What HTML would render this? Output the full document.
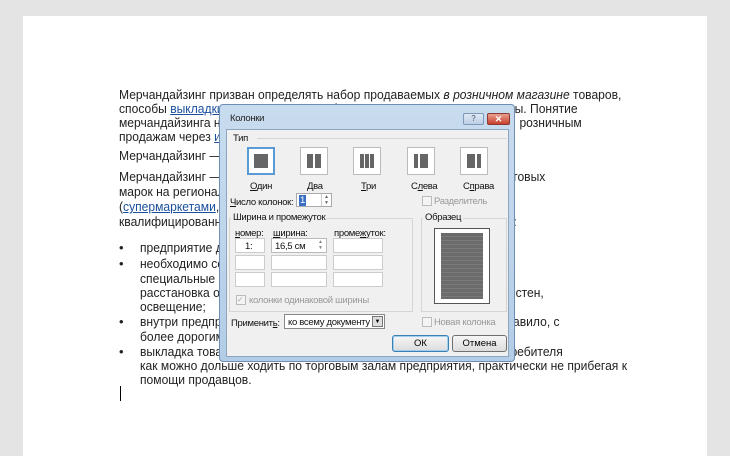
<!DOCTYPE html>
<html><head><meta charset="utf-8"><style>
*{margin:0;padding:0;box-sizing:border-box}
body{width:730px;height:447px;overflow:hidden;background:#e4e4e4;position:relative;font-family:"Liberation Sans",sans-serif}
.page{position:absolute;left:23px;top:16px;width:684px;height:440px;background:#fff}
.l{position:absolute;left:119px;font-size:13px;color:#222;white-space:nowrap;transform:scaleX(0.93);transform-origin:left;line-height:14px}
.b{left:140px}
.dot{position:absolute;left:119px;font-size:13px;color:#222}
a{color:#1a4f9c;text-decoration:underline}
.dlg{position:absolute;left:219px;top:104px;width:296px;height:258px;background:linear-gradient(#c9dcef,#b3cde6);border:1px solid #6d8fb3;border-radius:4px}
.in{position:absolute;left:6px;top:24px;width:283px;height:228px;background:#f0f0f0;border:1px solid #8ca6c2}
.t{position:absolute;font-size:9.5px;color:#111;white-space:nowrap;letter-spacing:-0.3px}
.g{color:#999}
.bg{background:#f0f0f0;padding:0 2px}
.ib{position:absolute;top:17px;width:28px;height:28px;background:#fff;border:1px solid #bbb}
.box{position:absolute;background:#fff;border:1px solid #aaa}
.gb{border-color:#ccc}
.fr{position:absolute;border:1px solid #d5d5d5}
.cb{position:absolute;width:10px;height:10px;border:1px solid #bbb;background:#f4f4f4}
.btn{position:absolute;height:17px;border:1px solid #707070;border-radius:3px;background:linear-gradient(#f6f6f6,#dcdcdc);font-size:9.5px;text-align:center;line-height:15px}
</style></head><body>
<div class="page"></div>
<div class="l" style="top:88px">Мерчандайзинг призван определять набор продаваемых <i>в розничном магазине</i> товаров,</div>
<div class="l" style="top:102px">способы <a>выкладки</a> товаров, а также оформление торговых мест и цены. Понятие</div>
<div class="l" style="top:116px">мерчандайзинга наиболее часто применяется к розничным продажам, розничным</div>
<div class="l" style="top:130px">продажам через <a>интернет</a>.</div>
<div class="l" style="top:149px">Мерчандайзинг — один из основных методов организации продаж.</div>
<div class="l" style="top:170px">Мерчандайзинг — комплекс мероприятий продвижения товаров и торговых</div>
<div class="l" style="top:185px">марок на региональном рынке, в местах продажи розничной торговли</div>
<div class="l" style="top:200px">(<a>супермаркетами</a>, ...), причиной возникновения послужила нехватка</div>
<div class="l" style="top:215px">квалифицированных продавцов. Основными примененения являются:</div>
<div class="dot" style="top:240px">•</div><div class="l b" style="top:241px">предприятие должно иметь достаточный запас товара;</div>
<div class="dot" style="top:256px">•</div><div class="l b" style="top:257px">необходимо создать все условия для покупателей, включая</div>
<div class="l b" style="top:272px">специальные витрины для товаров, оформление деревом и т. д.;</div>
<div class="l b" style="top:286px">расстановка оборудования в торговом зале, дизайн зала, окраска стен,</div>
<div class="l b" style="top:300px">освещение;</div>
<div class="dot" style="top:314px">•</div><div class="l b" style="top:315px">внутри предприятия располагать товары у точки покупочки, как правило, с</div>
<div class="l b" style="top:330px">более дорогими товарами;</div>
<div class="dot" style="top:344px">•</div><div class="l b" style="top:345px">выкладка товаров должна быть сделана так, чтобы заставить потребителя</div>
<div class="l b" style="top:359px">как можно дольше ходить по торговым залам предприятия, практически не прибегая к</div>
<div class="l b" style="top:373px">помощи продавцов.</div>
<div style="position:absolute;left:120px;top:386px;width:1px;height:15px;background:#000"></div>

<div class="dlg">
<div class="t" style="left:10px;top:8px;color:#222">Колонки</div>
<div style="position:absolute;left:243px;top:8px;width:21px;height:12px;border:1px solid #7d98b8;border-radius:2px;background:linear-gradient(#dfe9f5,#bccfe5);font-size:8px;text-align:center;line-height:10px;color:#456">?</div>
<div style="position:absolute;left:267px;top:8px;width:23px;height:12px;border:1px solid #8a3a30;border-radius:2px;background:linear-gradient(#e9a090,#c8402c);font-size:9px;text-align:center;line-height:10px;color:#fff;font-weight:bold">✕</div>
<div class="in">
<div class="fr" style="left:30px;top:8px;width:250px;height:0;border-width:1px 0 0 0"></div>
<div class="t" style="left:6px;top:3px">Тип</div>
<div class="ib" style="left:20px;border:2px solid #5b9bd5"><div style="position:absolute;left:5px;top:5px;width:14px;height:14px;background:#666"></div></div>
<div class="ib" style="left:73px"><div style="position:absolute;left:6px;top:6px;width:6px;height:14px;background:#666"></div><div style="position:absolute;left:14px;top:6px;width:6px;height:14px;background:#666"></div></div>
<div class="ib" style="left:126px"><div style="position:absolute;left:6px;top:6px;width:4px;height:14px;background:#666"></div><div style="position:absolute;left:11px;top:6px;width:4px;height:14px;background:#666"></div><div style="position:absolute;left:16px;top:6px;width:4px;height:14px;background:#666"></div></div>
<div class="ib" style="left:180px"><div style="position:absolute;left:6px;top:6px;width:4px;height:14px;background:#666"></div><div style="position:absolute;left:12px;top:6px;width:8px;height:14px;background:#666"></div></div>
<div class="ib" style="left:233px"><div style="position:absolute;left:6px;top:6px;width:8px;height:14px;background:#666"></div><div style="position:absolute;left:16px;top:6px;width:4px;height:14px;background:#666"></div></div>
<div class="t" style="left:23px;top:51px"><u>О</u>дин</div>
<div class="t" style="left:80px;top:51px"><u>Д</u>ва</div>
<div class="t" style="left:134px;top:51px"><u>Т</u>ри</div>
<div class="t" style="left:184px;top:51px">С<u>л</u>ева</div>
<div class="t" style="left:236px;top:51px">С<u>п</u>рава</div>
<div class="t" style="left:3px;top:67px"><u>Ч</u>исло колонок:</div>
<div class="box" style="left:69px;top:63px;width:36px;height:14px"><span class="t" style="left:2px;top:1px;background:#3a6fc4;color:#fff;padding:0 1px">1</span><div style="position:absolute;right:0;top:0;width:10px;height:12px;border-left:1px solid #ccc;font-size:5px;color:#666;text-align:center;line-height:6px">▲<br>▼</div></div>
<div class="cb" style="left:195px;top:66px"></div><div class="t g" style="left:207px;top:66px">Разделитель</div>
<div class="fr" style="left:2px;top:88px;width:184px;height:94px"></div>
<div class="t bg" style="left:4px;top:82px">Ширина и промежуток</div>
<div class="fr" style="left:194px;top:88px;width:86px;height:94px"></div>
<div class="t bg" style="left:196px;top:82px">Образец</div>
<div style="position:absolute;left:207px;top:98px;width:56px;height:76px;background:#fff;border:1px solid #555"><div style="position:absolute;left:6px;top:4px;width:42px;height:66px;background:repeating-linear-gradient(#6b6b6b 0 3px,#7a7a7a 3px 4px)"></div></div>
<div class="t" style="left:8px;top:98px"><u>н</u>омер:</div>
<div class="t" style="left:46px;top:98px"><u>ш</u>ирина:</div>
<div class="t" style="left:107px;top:98px">проме<u>ж</u>уток:</div>
<div class="box gb" style="left:8px;top:108px;width:30px;height:15px"><span class="t" style="left:9px;top:2px">1:</span></div>
<div class="box" style="left:44px;top:108px;width:56px;height:15px;border-color:#bbb"><span class="t" style="left:3px;top:2px">16,5 см</span><div style="position:absolute;right:0;top:0;width:11px;height:13px;font-size:5px;color:#888;text-align:center;line-height:6px">▲<br>▼</div></div>
<div class="box gb" style="left:106px;top:108px;width:50px;height:15px"></div>
<div class="box gb" style="left:8px;top:125px;width:30px;height:15px"></div>
<div class="box gb" style="left:44px;top:125px;width:56px;height:15px"></div>
<div class="box gb" style="left:106px;top:125px;width:50px;height:15px"></div>
<div class="box gb" style="left:8px;top:142px;width:30px;height:15px"></div>
<div class="box gb" style="left:44px;top:142px;width:56px;height:15px"></div>
<div class="box gb" style="left:106px;top:142px;width:50px;height:15px"></div>
<div class="cb" style="left:9px;top:165px;font-size:8px;color:#aaa;line-height:8px">✓</div><div class="t g" style="left:22px;top:165px">колонки одинаковой ширины</div>
<div class="t" style="left:4px;top:188px">Применит<u>ь</u>:</div>
<div class="box" style="left:57px;top:184px;width:101px;height:15px;border-color:#888"><span class="t" style="left:3px;top:2px">ко всему документу</span><div style="position:absolute;right:1px;top:1px;width:11px;height:11px;border:1px solid #777;background:#ddd;font-size:6px;text-align:center;line-height:10px">▼</div></div>
<div class="cb" style="left:195px;top:187px"></div><div class="t g" style="left:207px;top:187px">Новая колонка</div>
<div class="btn" style="left:165px;top:205px;width:57px;border-color:#3c7fb1;box-shadow:inset 0 0 0 1px #9fd0f0">ОК</div>
<div class="btn" style="left:225px;top:205px;width:55px">Отмена</div>
</div>
</div>
</body></html>
